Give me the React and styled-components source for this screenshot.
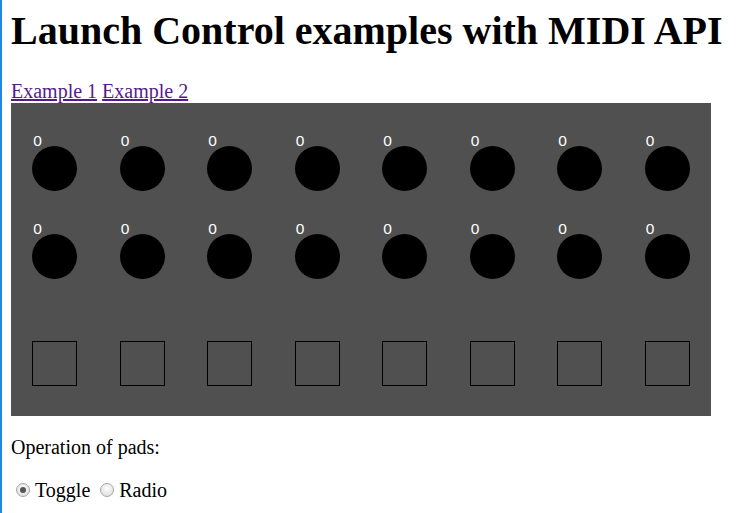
import React, { useState } from "react";
import styled, { createGlobalStyle } from "styled-components";

const GlobalStyle = createGlobalStyle`
  html {
    border-left: 2px solid #1e88e5;
    padding-left: 1px;
  }
  body {
    margin: 0 8px;
    font-family: "Liberation Serif", "Times New Roman", serif;
    font-size: 20px;
    color: #000;
    background: #fff;
  }
`;

const Title = styled.h1`
  font-size: 40px;
  font-weight: bold;
  margin: 7px 0 26px;
  white-space: nowrap;
`;

const Links = styled.div`
  a {
    color: #551a8b;
  }
`;

const Panel = styled.div`
  width: 700px;
  height: 313px;
  box-sizing: border-box;
  background: #505050;
  padding: 32px 0 30px;
  display: flex;
  flex-direction: column;
`;

const Row = styled.div`
  display: grid;
  grid-template-columns: repeat(8, 1fr);
  justify-items: center;
  margin-bottom: ${props => props.gap || 0}px;
`;

const Knob = styled.div`
  width: 45px;
  display: flex;
  flex-direction: column;
`;

const KnobValue = styled.span`
  font-family: "Liberation Sans", Arial, sans-serif;
  font-size: 15.5px;
  line-height: 12px;
  color: #fff;
  margin: 0 0 -1px 1px;
`;

const Dial = styled.div`
  width: 45px;
  height: 45px;
  border-radius: 50%;
  background: #000;
`;

const Pad = styled.div`
  width: 45px;
  height: 45px;
  box-sizing: border-box;
  border: 1px solid #000;
  background: ${props => (props.on ? "#e0e0e0" : "transparent")};
`;

const Text = styled.p`
  margin: 20px 0;
`;

const Radio = styled.input`
  appearance: none;
  display: inline-block;
  width: 14px;
  height: 14px;
  margin: 3px 5px 0 5px;
  padding: 0;
  border-radius: 50%;
  border: 1px solid #a6a6a6;
  background: radial-gradient(circle at 50% 35%, #fdfdfd, #d8d8d8);
  box-sizing: border-box;
  position: relative;
  vertical-align: 0;
  &:checked::after {
    content: "";
    position: absolute;
    left: 3px;
    top: 3px;
    width: 6px;
    height: 6px;
    border-radius: 50%;
    background: #555;
  }
`;

const cols = Array.from({ length: 8 }, (_, i) => i);

export default function App() {
  const [mode, setMode] = useState("toggle");

  const knobRow = gap => (
    <Row gap={gap}>
      {cols.map(i => (
        <Knob key={i}>
          <KnobValue>0</KnobValue>
          <Dial />
        </Knob>
      ))}
    </Row>
  );

  return (
    <>
      <GlobalStyle />
      <Title>Launch Control examples with MIDI API</Title>
      <Links>
        <a href="#1">Example 1</a> <a href="#2">Example 2</a>
      </Links>
      <Panel>
        {knobRow(32)}
        {knobRow(62)}
        <Row>
          {cols.map(i => (
            <Pad key={i} />
          ))}
        </Row>
      </Panel>
      <Text>Operation of pads:</Text>
      <Text>
        <Radio
          type="radio"
          name="mode"
          checked={mode === "toggle"}
          onChange={() => setMode("toggle")}
        />
        Toggle{" "}
        <Radio
          type="radio"
          name="mode"
          checked={mode === "radio"}
          onChange={() => setMode("radio")}
        />
        Radio
      </Text>
    </>
  );
}
